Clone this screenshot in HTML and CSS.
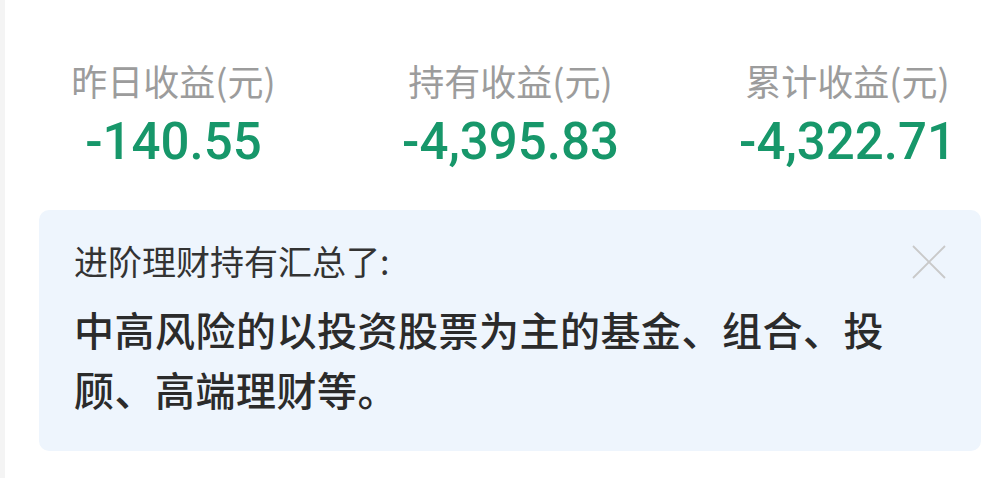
FILE: index.html
```html
<!DOCTYPE html>
<html lang="zh-CN">
<head>
<meta charset="utf-8">
<title>收益</title>
<link rel="stylesheet" href="styles.css">
</head>
<body>
<div class="page">
  <div class="strip"></div>
  <main class="main">
    <section class="stats">
      <div class="stat">
        <div class="label">昨日收益(元)</div>
        <div class="value">-140.55</div>
      </div>
      <div class="stat">
        <div class="label">持有收益(元)</div>
        <div class="value">-4,395.83</div>
      </div>
      <div class="stat">
        <div class="label">累计收益(元)</div>
        <div class="value">-4,322.71</div>
      </div>
    </section>
    <section class="notice">
      <div class="notice-title">进阶理财持有汇总了:</div>
      <div class="notice-body">中高风险的以投资股票为主的基金、组合、投顾、高端理财等。</div>
      <button class="close" aria-label="关闭">
        <svg viewBox="0 0 34 34" width="34" height="34"><path d="M1 1 L33 33 M33 1 L1 33" stroke="#c9c9c9" stroke-width="1.8" fill="none"/></svg>
      </button>
    </section>
  </main>
</div>
</body>
</html>
```

FILE: styles.css
```css
html, body {
  margin: 0;
  padding: 0;
  background: #ffffff;
}
body {
  width: 993px;
  height: 478px;
  overflow: hidden;
  font-family: "Noto Sans CJK SC", "Noto Sans", sans-serif;
}
.page {
  display: flex;
  height: 478px;
}
.strip {
  width: 5px;
  flex: none;
  background: #f4f4f4;
}
.main {
  flex: 1;
  min-width: 0;
  display: flex;
  flex-direction: column;
}
.stats {
  display: grid;
  grid-template-columns: repeat(3, 337px);
  width: 1011px;
  padding-top: 58px;
}
.stat {
  display: flex;
  flex-direction: column;
  align-items: center;
  gap: 10px;
}
.label {
  font-size: 36px;
  line-height: 44px;
  color: #9c9c9c;
  white-space: nowrap;
}
.value {
  font-family: Roboto, "Liberation Sans", sans-serif;
  font-weight: 500;
  font-size: 51px;
  line-height: 60px;
  color: #17976a;
  white-space: nowrap;
}
.notice {
  position: relative;
  margin: 38px 0 0 34px;
  width: 942px;
  box-sizing: border-box;
  padding: 29px 80px 32px 35px;
  background: #eef5fd;
  border-radius: 10px;
}
.notice-title {
  font-size: 34px;
  line-height: 44px;
  color: #333333;
  margin-bottom: 16px;
}
.notice-body {
  font-size: 40px;
  line-height: 60px;
  letter-spacing: 0.5px;
  font-weight: 500;
  color: #2b2b2b;
}
.close {
  position: absolute;
  top: 35px;
  right: 35px;
  width: 34px;
  height: 34px;
  padding: 0;
  border: 0;
  background: transparent;
}
.close svg {
  display: block;
}
```
